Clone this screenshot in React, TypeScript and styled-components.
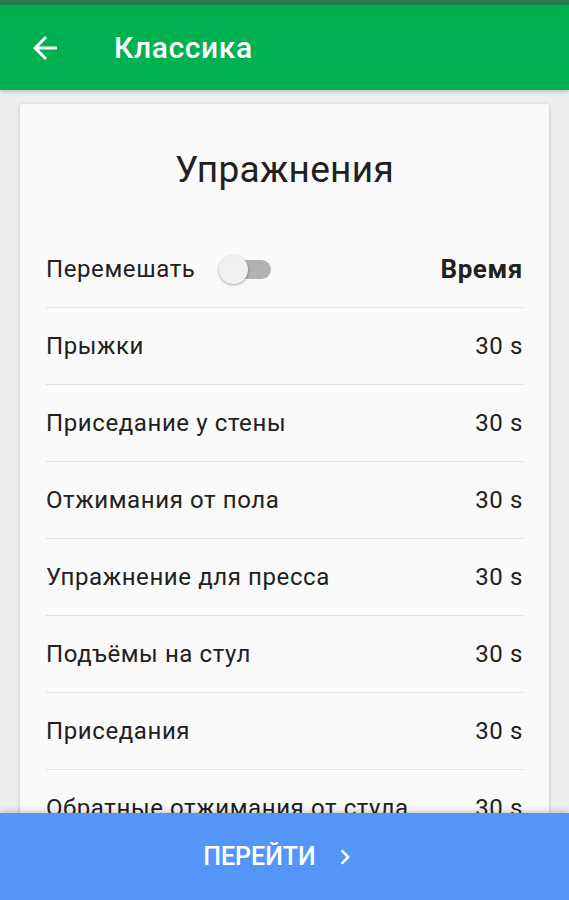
import React from 'react';
import styled, { createGlobalStyle } from 'styled-components';

const exercises = [
  'Прыжки',
  'Приседание у стены',
  'Отжимания от пола',
  'Упражнение для пресса',
  'Подъёмы на стул',
  'Приседания',
  'Обратные отжимания от стула',
  'Планка',
];

export default function App() {
  return (
    <>
      <GlobalStyle />
      <Screen>
        <StatusStrip />
        <AppBar>
          <BackButton aria-label="Назад">
            <svg width="36" height="36" viewBox="0 0 24 24">
              <path
                d="M20 11H7.83l5.59-5.59L12 4l-8 8 8 8 1.41-1.41L7.83 13H20v-2z"
                fill="#fff"
              />
            </svg>
          </BackButton>
          <Title>Классика</Title>
        </AppBar>
        <Content>
          <Card>
            <CardTitle>Упражнения</CardTitle>
            <Row>
              <ShuffleGroup>
                <Label>Перемешать</Label>
                <Switch>
                  <Thumb />
                </Switch>
              </ShuffleGroup>
              <Value bold>Время</Value>
            </Row>
            {exercises.map((name) => (
              <Row key={name}>
                <Label>{name}</Label>
                <Value>30 s</Value>
              </Row>
            ))}
          </Card>
        </Content>
        <Footer>
          <GoButton>
            ПЕРЕЙТИ
            <svg width="30" height="30" viewBox="0 0 24 24">
              <path d="M8.59 16.59L13.17 12 8.59 7.41 10 6l6 6-6 6-1.41-1.41z" fill="#fff" />
            </svg>
          </GoButton>
        </Footer>
      </Screen>
    </>
  );
}

const GlobalStyle = createGlobalStyle`
  html, body {
    margin: 0;
    padding: 0;
    background: #eeeeee;
  }

  body {
    font-family: Roboto, 'Noto Sans', sans-serif;
  }
`;

const Screen = styled.div`
  display: flex;
  flex-direction: column;
  height: 100vh;
  overflow: hidden;
`;

const StatusStrip = styled.div`
  height: 5px;
  background: #287c4d;
  flex-shrink: 0;
`;

const AppBar = styled.header`
  height: 85px;
  flex-shrink: 0;
  display: flex;
  align-items: center;
  background: #00b152;
  box-shadow: 0 2px 4px rgba(0, 0, 0, 0.2);
  position: relative;
  z-index: 2;
`;

const BackButton = styled.button`
  display: flex;
  align-items: center;
  justify-content: center;
  margin-left: 27px;
  padding: 0;
  width: 36px;
  height: 36px;
  border: none;
  background: none;
  cursor: pointer;
`;

const Title = styled.h1`
  margin: 0 0 0 51px;
  color: #fff;
  font-size: 30px;
  font-weight: 500;
  letter-spacing: 0.6px;
`;

const Content = styled.main`
  flex: 1;
  overflow: hidden;
  padding: 14px 20px 0;
`;

const Card = styled.section`
  background: #fafafa;
  border-radius: 2px;
  box-shadow: 0 1px 4px rgba(0, 0, 0, 0.2);
  padding: 44px 26px 0;
`;

const CardTitle = styled.h2`
  margin: 0 0 39px;
  text-align: center;
  font-size: 37px;
  line-height: 44px;
  font-weight: 400;
  letter-spacing: 0.3px;
  color: #212121;
`;

const Row = styled.div`
  display: flex;
  align-items: center;
  justify-content: space-between;
  height: 76px;
  border-bottom: 1px solid #e2e2e2;
`;

const ShuffleGroup = styled.div`
  display: flex;
  align-items: center;
  gap: 24px;
`;

const Label = styled.span`
  font-size: 24px;
  letter-spacing: 0.6px;
  color: #212121;
`;

const Value = styled.span<{ bold?: boolean }>`
  font-size: ${(p) => (p.bold ? 26 : 24)}px;
  font-weight: ${(p) => (p.bold ? 700 : 400)};
  letter-spacing: 0.6px;
  color: #212121;
`;

const Switch = styled.div`
  position: relative;
  width: 36px;
  height: 19px;
  margin-left: 16px;
  border-radius: 10px;
  background: #b2b2b2;
`;

const Thumb = styled.div`
  position: absolute;
  left: -16px;
  top: -5px;
  width: 29px;
  height: 29px;
  border-radius: 50%;
  background: #f1f1f1;
  box-shadow: 0 1px 3px rgba(0, 0, 0, 0.35);
`;

const Footer = styled.footer`
  height: 87px;
  flex-shrink: 0;
  background: #5396f8;
  box-shadow: 0 -2px 6px rgba(0, 0, 0, 0.18);
  position: relative;
  z-index: 2;
  display: flex;
  align-items: center;
  justify-content: center;
`;

const GoButton = styled.button`
  display: flex;
  align-items: center;
  gap: 14px;
  margin-right: 6px;
  padding: 0;
  border: none;
  background: none;
  color: #fff;
  font-family: Roboto, 'Noto Sans', sans-serif;
  font-size: 25px;
  font-weight: 500;
  cursor: pointer;
`;
